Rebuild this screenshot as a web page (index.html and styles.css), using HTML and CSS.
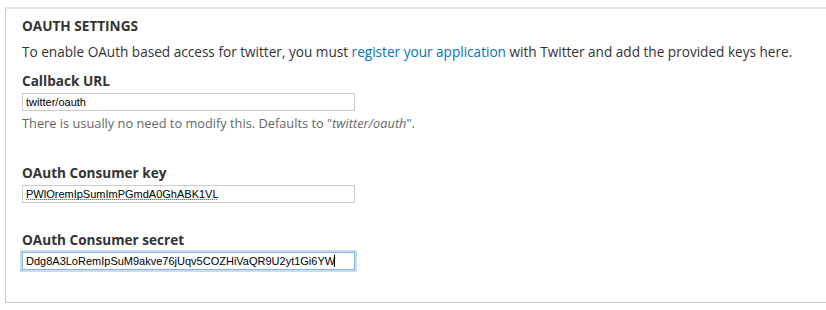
FILE: index.html
```html
<!DOCTYPE html>
<html>
<head>
<meta charset="utf-8">
<link rel="stylesheet" href="styles.css">
</head>
<body>
<fieldset class="settings">
  <legend class="title">OAUTH SETTINGS</legend>
  <p class="intro">To enable OAuth based access for twitter, you must <a href="#" class="link">register your application</a> with Twitter and add the provided keys here.</p>
  <div class="field">
    <label class="label">Callback URL</label>
    <input class="text" type="text" value="twitter/oauth">
    <div class="desc">There is usually no need to modify this. Defaults to "<em>twitter/oauth</em>".</div>
  </div>
  <div class="field gap">
    <label class="label">OAuth Consumer key</label>
    <input class="text spell" type="text" value="PWlOremIpSumImPGmdA0GhABK1VL">
  </div>
  <div class="field gap2">
    <label class="label">OAuth Consumer secret</label>
    <input class="text focus" type="text" value="Ddg8A3LoRemIpSuM9akve76jUqv5COZHiVaQR9U2yt1Gi6YW">
  </div>
</fieldset>
</body>
</html>
```
FILE: styles.css
```css
html, body { margin: 0; padding: 0; background: #fff; }
body { font-family: "Open Sans", "Liberation Sans", sans-serif; color: #333; }
.settings {
  margin: 7px -10px 0 5px;
  padding: 0 0 0 16px;
  border: 1px solid #ccc;
  border-top: 2px solid #e6e6e6;
  height: 296px;
  box-sizing: border-box;
  position: relative;
}
.title {
  display: block;
  float: left;
  width: 100%;
  padding: 0;
  margin: 8px 0 0 0;
  font-size: 13.6px;
  font-weight: bold;
  line-height: 18px;
  color: #333;
}
.intro {
  clear: both;
  margin: 0;
  padding-top: 8px;
  font-size: 13.6px;
  line-height: 18px;
}
.link { color: #0074bd; text-decoration: none; }
.field { margin-top: 11px; }
.field.gap { margin-top: 33px; }
.field.gap2 { margin-top: 28px; }
.label {
  display: block;
  font-size: 13.6px;
  font-weight: bold;
  line-height: 18px;
}
.text {
  display: block;
  width: 333px;
  height: 18px;
  box-sizing: border-box;
  margin: 3px 0 0 0;
  padding: 0 3px;
  border: 1px solid #ccc;
  background-color: #fff;
  font-family: "Liberation Sans", Arial, sans-serif;
  font-size: 11px;
  color: #000;
  outline: none;
}
.spell {
  background-image: repeating-linear-gradient(90deg, #e44 0 1px, transparent 1px 2px);
  background-repeat: no-repeat;
  background-position: 3px 13px;
  background-size: 191px 1px;
}
.focus {
  border-color: #8eb3e2;
  box-shadow: 0 0 0 2px #c6dcf5;
  background-image: linear-gradient(#000, #000);
  background-repeat: no-repeat;
  background-position: 311px 2px;
  background-size: 1px 12px;
}
.desc {
  margin-top: 4px;
  font-size: 12.8px;
  line-height: 16px;
  color: #666;
}
```
